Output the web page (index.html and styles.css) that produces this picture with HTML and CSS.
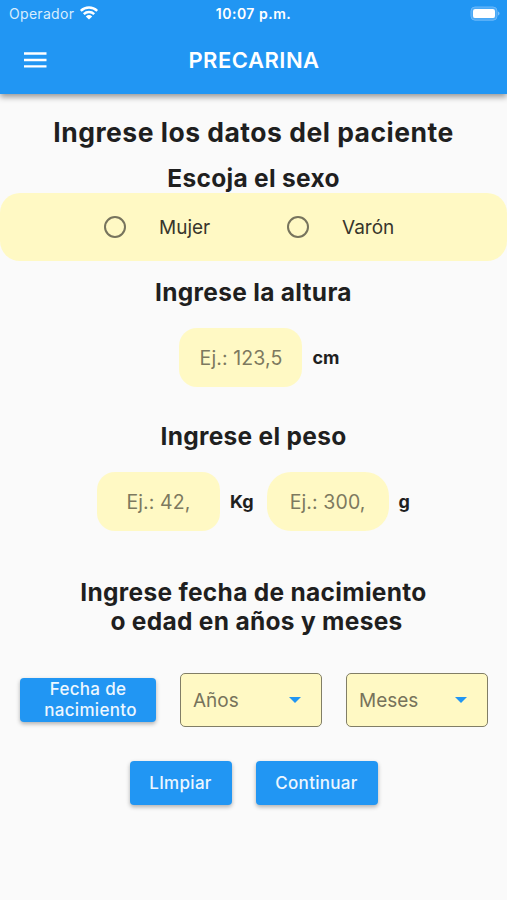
FILE: index.html
```html
<!DOCTYPE html>
<html lang="es">
<head>
  <meta charset="UTF-8">
  <meta name="viewport" content="width=device-width, initial-scale=1.0">
  <title>PRECARINA</title>
  <link rel="stylesheet" href="styles.css">
</head>
<body>
  <header class="header">
    <div class="status-bar">
      <div class="carrier">
        <span>Operador</span>
        <svg class="wifi" width="20" height="15" viewBox="0 0 20 15">
          <path d="M1.8 4.8a11.8 11.8 0 0 1 16.4 0M4.8 8.1a7.5 7.5 0 0 1 10.4 0" fill="none" stroke="#fff" stroke-width="2.4"/>
          <path d="M6.8 10.4a4.9 4.9 0 0 1 6.4 0L10 13.6z" fill="#fff"/>
        </svg>
      </div>
      <span class="time">10:07 p.m.</span>
      <svg class="battery" width="31" height="16" viewBox="0 0 31 16">
        <rect x="2" y="1" width="26" height="13.2" rx="4" fill="#4aa9f6" stroke="#6ab8f9"/>
        <rect x="4" y="3.1" width="22" height="9" rx="2.2" fill="#fff"/>
        <path d="M29.2 5.6c1.7.6 1.7 3.4 0 4z" fill="#90cbfb"/>
      </svg>
    </div>
    <div class="navbar">
      <svg class="menu" width="24" height="16" viewBox="0 0 24 16">
        <path d="M0 1.5h22.5M0 8h22.5M0 14.4h22.5" stroke="#fff" stroke-width="2.4"/>
      </svg>
      <h1>PRECARINA</h1>
    </div>
  </header>

  <form class="container" id="patientForm">
    <h2 class="title">Ingrese los datos del paciente</h2>

    <h3 class="sex-title">Escoja el sexo</h3>
    <div class="sex">
      <label><input type="radio" name="sex" value="F">Mujer</label>
      <label><input type="radio" name="sex" value="M">Varón</label>
    </div>

    <h3 class="height-title">Ingrese la altura</h3>
    <div class="measures">
      <input type="text" name="height" placeholder="Ej.: 123,5">
      <span class="unit">cm</span>
    </div>

    <h3 class="weight-title">Ingrese el peso</h3>
    <div class="measures weight">
      <input type="text" name="kg" placeholder="Ej.: 42,">
      <span class="unit unit-kg">Kg</span>
      <input class="round" type="text" name="grams" placeholder="Ej.: 300,">
      <span class="unit">g</span>
    </div>

    <h3 class="age-title">Ingrese fecha de nacimiento<br><span class="age-second">o edad en años y meses</span></h3>
    <div class="age">
      <button type="button" class="btn birth"><span>Fecha de</span><span class="birth-second">nacimiento</span></button>
      <div class="select">
        <span>Años</span>
        <svg width="12" height="6" viewBox="0 0 12 6"><path d="M0 0h12L6 6z" fill="#2196f3"/></svg>
      </div>
      <div class="select">
        <span>Meses</span>
        <svg width="12" height="6" viewBox="0 0 12 6"><path d="M0 0h12L6 6z" fill="#2196f3"/></svg>
      </div>
    </div>

    <div class="actions">
      <button type="reset" class="btn clear">LImpiar</button>
      <button type="button" class="btn next">Continuar</button>
    </div>
  </form>
</body>
</html>
```
FILE: styles.css
```css
* {
  box-sizing: border-box;
}
body {
  font-family: Inter, Roboto, sans-serif;
  margin: 0;
  min-height: 100vh;
  background-color: #fafafa;
  color: #1f1f1f;
}
svg {
  display: block;
}
.header {
  height: 94px;
  background-color: #2196f3;
  color: white;
  box-shadow: 0 3px 6px rgba(0, 0, 0, 0.4);
}
.status-bar {
  display: grid;
  grid-template-columns: 1fr auto 1fr;
  align-items: center;
  height: 27px;
  padding: 0 7px 0 9px;
}
.carrier {
  display: flex;
  align-items: center;
  gap: 5px;
  font-size: 14px;
  letter-spacing: 0.3px;
  color: #d8edfd;
}
.time {
  margin-left: -2px;
  font-size: 14px;
  font-weight: 600;
  letter-spacing: 0.5px;
}
.battery {
  justify-self: end;
}
.navbar {
  display: grid;
  grid-template-columns: 1fr auto 1fr;
  align-items: center;
  height: 66px;
  padding: 0 24px;
}
.navbar h1 {
  margin: 0 0 0 1px;
  font-size: 22px;
  font-weight: 600;
  letter-spacing: 0.5px;
}
.container {
  display: flex;
  flex-direction: column;
}
h2, h3 {
  margin: 0;
  text-align: center;
  font-weight: 650;
}
.title {
  margin-top: 22px;
  font-size: 26.5px;
  line-height: 32px;
  letter-spacing: 0.5px;
}
h3 {
  font-size: 24.5px;
  line-height: 30px;
  letter-spacing: 0.3px;
}
.sex-title {
  margin-top: 15px;
}
.sex {
  display: flex;
  height: 68px;
  padding-left: 104px;
  border-radius: 20px;
  background-color: #fff9c4;
}
.sex label {
  display: flex;
  align-items: center;
  width: 183px;
  font-size: 19px;
  color: #38362c;
}
.sex input {
  appearance: none;
  width: 22px;
  height: 22px;
  margin: 0 33px 0 0;
  border: 2px solid #77745d;
  border-radius: 50%;
}
.height-title {
  margin-top: 16px;
}
.weight-title {
  margin-top: 34px;
}
.measures {
  display: flex;
  justify-content: center;
  align-items: center;
  margin-top: 21px;
  padding-left: 12px;
}
.weight {
  padding-left: 0;
}
.measures input {
  width: 123px;
  height: 59px;
  padding: 0;
  border: none;
  border-radius: 18px;
  background-color: #fff9c4;
  font: 19.5px Inter, Roboto, sans-serif;
  letter-spacing: 0.1px;
  text-align: center;
}
.measures .round {
  width: 122px;
  border-radius: 24px;
}
.measures input::placeholder {
  color: #7d795f;
}
.unit {
  margin-left: 10px;
  font-size: 18px;
  font-weight: 650;
}
.unit-kg {
  margin-right: 13px;
}
.age-title {
  margin-top: 47px;
  line-height: 29px;
}
.age-second {
  margin-left: 6px;
}
.age {
  display: flex;
  align-items: center;
  gap: 24px;
  margin-top: 37px;
  padding: 0 19px 0 20px;
}
.btn {
  height: 44px;
  padding: 0;
  border: none;
  border-radius: 4px;
  background-color: #2196f3;
  box-shadow: 0 2px 4px rgba(0, 0, 0, 0.3);
  color: #ecf7ff;
  font: 500 17px Inter, Roboto, sans-serif;
  letter-spacing: 0.3px;
}
.birth {
  display: flex;
  flex-direction: column;
  align-items: center;
  justify-content: center;
  width: 136px;
  line-height: 21px;
}
.birth-second {
  margin-left: 5px;
}
.select {
  display: flex;
  justify-content: space-between;
  align-items: center;
  width: 142px;
  height: 54px;
  padding: 0 20px 0 12px;
  border: 1px solid #817e66;
  border-radius: 5px;
  background-color: #fff9c4;
  color: #77735b;
  font-size: 19px;
}
.actions {
  display: flex;
  justify-content: center;
  gap: 24px;
  margin-top: 34px;
}
.clear {
  width: 102px;
}
.next {
  width: 122px;
}
```
